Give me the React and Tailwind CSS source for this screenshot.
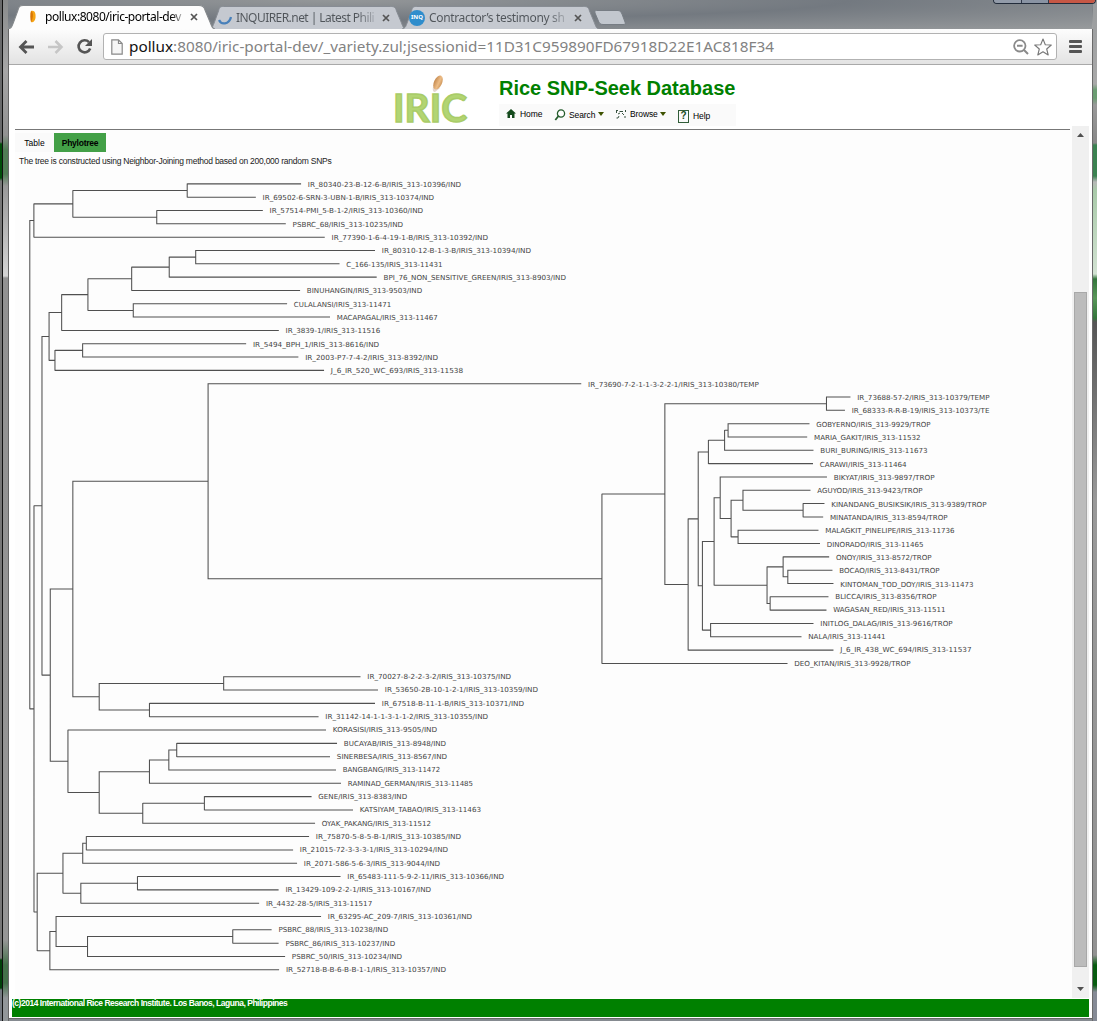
import React from "react";

const FIRST_ROW = 183.9;
const ROW_STEP = 13.336;
const CHART_TOP = 170;

// Leaf: [branch end, label right edge, label]. Branch: { x, c: [upper, lower] }.
const n = (x, a, b) => ({ x, c: [a, b] });

const tree = n(29.4,
  n(33.5,
    n(72.5,
      n(187, [301, 461, "IR_80340-23-B-12-6-B/IRIS_313-10396/IND"], [255.7, 434, "IR_69502-6-SRN-3-UBN-1-B/IRIS_313-10374/IND"]),
      n(156.5, [262.7, 423, "IR_57514-PMI_5-B-1-2/IRIS_313-10360/IND"], [285.7, 403, "PSBRC_68/IRIS_313-10235/IND"])),
    [324.7, 488, "IR_77390-1-6-4-19-1-B/IRIS_313-10392/IND"]),
  n(33.6,
    n(41.6,
      n(48.7,
        n(61.3,
          n(87.6,
            n(131.4,
              n(169,
                n(195.5, [375, 531, "IR_80310-12-B-1-3-B/IRIS_313-10394/IND"], [339.5, 442.5, "C_166-135/IRIS_313-11431"]),
                [376.7, 566, "BPI_76_NON_SENSITIVE_GREEN/IRIS_313-8903/IND"]),
              [300, 422, "BINUHANGIN/IRIS_313-9503/IND"]),
            n(133, [287, 391, "CULALANSI/IRIS_313-11471"], [330, 437.5, "MACAPAGAL/IRIS_313-11467"])),
          [278.7, 380, "IR_3839-1/IRIS_313-11516"]),
        n(54.6,
          n(82.3, [246, 379, "IR_5494_BPH_1/IRIS_313-8616/IND"], [298.3, 438, "IR_2003-P7-7-4-2/IRIS_313-8392/IND"]),
          [324, 463, "J_6_IR_520_WC_693/IRIS_313-11538"])),
      n(49.9,
        n(72.5,
          n(207.9,
            [581.5, 759, "IR_73690-7-2-1-1-3-2-2-1/IRIS_313-10380/TEMP"],
            n(602.2,
              n(665.2,
                n(827, [851, 990, "IR_73688-57-2/IRIS_313-10379/TEMP"], [845.5, 990, "IR_68333-R-R-B-19/IRIS_313-10373/TE"]),
                n(688.5,
                  n(698.6,
                    n(708.8,
                      n(725,
                        n(728.5, [810, 931, "GOBYERNO/IRIS_313-9929/TROP"], [807.7, 921, "MARIA_GAKIT/IRIS_313-11532"]),
                        [814, 928, "BURI_BURING/IRIS_313-11673"]),
                      [813.5, 907, "CARAWI/IRIS_313-11464"]),
                    n(702.8,
                      n(714.5,
                        n(720.6,
                          [827.5, 935, "BIKYAT/IRIS_313-9897/TROP"],
                          n(731.5,
                            n(743.4,
                              [811, 923, "AGUYOD/IRIS_313-9423/TROP"],
                              n(803.6, [825, 987, "KINANDANG_BUSIKSIK/IRIS_313-9389/TROP"], [823.7, 948, "MINATANDA/IRIS_313-8594/TROP"])),
                            n(738.5, [819, 955, "MALAGKIT_PINELIPE/IRIS_313-11736"], [820.5, 924, "DINORADO/IRIS_313-11465"]))),
                        n(767.5,
                          n(783.6,
                            [829.7, 932, "ONOY/IRIS_313-8572/TROP"],
                            n(788.3, [833, 940, "BOCAO/IRIS_313-8431/TROP"], [834, 974, "KINTOMAN_TOD_DOY/IRIS_313-11473"])),
                          n(770.6, [829, 937, "BLICCA/IRIS_313-8356/TROP"], [827, 946, "WAGASAN_RED/IRIS_313-11511"]))),
                      n(711, [814, 953, "INITLOG_DALAG/IRIS_313-9616/TROP"], [802, 886, "NALA/IRIS_313-11441"]))),
                  [834, 972, "J_6_IR_438_WC_694/IRIS_313-11537"])),
              [788, 911, "DEO_KITAN/IRIS_313-9928/TROP"])),
          n(98.9,
            n(223.5, [360.5, 511, "IR_70027-8-2-2-3-2/IRIS_313-10375/IND"], [378, 538, "IR_53650-2B-10-1-2-1/IRIS_313-10359/IND"]),
            n(149.2, [375, 524, "IR_67518-B-11-1-B/IRIS_313-10371/IND"], [318.5, 488, "IR_31142-14-1-1-3-1-1-2/IRIS_313-10355/IND"]))),
        n(67.6,
          [326, 437, "KORASISI/IRIS_313-9505/IND"],
          n(98.9,
            n(149.2,
              n(168.6,
                n(176.5, [337, 446, "BUCAYAB/IRIS_313-8948/IND"], [330, 447, "SINERBESA/IRIS_313-8567/IND"]),
                [336, 440, "BANGBANG/IRIS_313-11472"]),
              [341, 473, "RAMINAD_GERMAN/IRIS_313-11485"]),
            n(142.5,
              n(204.2, [311.5, 407, "GENE/IRIS_313-8383/IND"], [353, 481, "KATSIYAM_TABAO/IRIS_313-11463"]),
              [315, 431, "OYAK_PAKANG/IRIS_313-11512"]))))),
    n(36.8,
      n(62.6,
        n(82.4,
          n(86, [309, 461, "IR_75870-5-8-5-B-1/IRIS_313-10385/IND"], [293, 448, "IR_21015-72-3-3-3-1/IRIS_313-10294/IND"]),
          [297, 440, "IR_2071-586-5-6-3/IRIS_313-9044/IND"]),
        n(80.5,
          n(137.2, [340.5, 504, "IR_65483-111-5-9-2-11/IRIS_313-10366/IND"], [278.5, 431, "IR_13429-109-2-2-1/IRIS_313-10167/IND"]),
          [259, 372, "IR_4432-28-5/IRIS_313-11517"])),
      n(49.5,
        n(55.7,
          [321, 472, "IR_63295-AC_209-7/IRIS_313-10361/IND"],
          n(87.2,
            n(232.6, [271.5, 388, "PSBRC_88/IRIS_313-10238/IND"], [278.5, 395, "PSBRC_86/IRIS_313-10237/IND"]),
            [285, 402, "PSBRC_50/IRIS_313-10234/IND"])),
        [279, 446, "IR_52718-B-B-6-B-B-1-1/IRIS_313-10357/IND"]))));

function layoutTree(root) {
  const lines = [];
  const labels = [];
  let row = 0;
  const visit = (node, fromX) => {
    if (Array.isArray(node)) {
      const y = FIRST_ROW + ROW_STEP * row++;
      lines.push(`M${fromX} ${y}H${node[0]}`);
      labels.push({ x: node[0] + 6.6, end: node[1], y, text: node[2] });
      return y;
    }
    const top = visit(node.c[0], node.x);
    const bottom = visit(node.c[1], node.x);
    const mid = (top + bottom) / 2;
    lines.push(`M${node.x} ${top - 0.4}V${bottom + 0.4}`);
    if (fromX !== null) lines.push(`M${fromX} ${mid}H${node.x}`);
    return mid;
  };
  visit(root, null);
  return { path: lines.join(""), labels };
}

const chart = layoutTree(tree);

function PhyloTree() {
  return (
    <svg className="block h-[829px] w-[1057px]" viewBox={`15 ${CHART_TOP} 1057 829`}>
      <path d={chart.path} fill="none" stroke="#505050" strokeWidth="1.05" transform="translate(-0.2 0)" />
      <g className="fill-[#444] font-['DejaVu_Sans',sans-serif] text-[7px]">
        {chart.labels.map((l) => (
          <text key={l.text} x={l.x} y={Math.round(l.y + 2.75)} textLength={l.end - l.x} lengthAdjust="spacingAndGlyphs">
            {l.text}
          </text>
        ))}
      </g>
    </svg>
  );
}

function TabShape({ active }) {
  return (
    <svg className="absolute inset-0 h-full w-full" viewBox="0 0 206 24" preserveAspectRatio="none">
      <path
        d="M0 24C4 23 4 21 6 16L10 5C11 1 12 .5 15 .5H190C193 .5 195 1 196 5L201 17C203 22 203 23 206 24"
        fill={active ? "#fdfdfd" : "#c5c9d0"}
        stroke={active ? "#85898c" : "#858a91"}
        strokeWidth="1"
      />
    </svg>
  );
}

function CloseX() {
  return (
    <svg className="h-[8px] w-[8px] shrink-0" viewBox="0 0 8 8">
      <path d="M1 1L7 7M7 1L1 7" stroke="#555" strokeWidth="1.7" />
    </svg>
  );
}

function TabStrip() {
  return (
    <div className="flex h-[29px] items-end font-['Noto_Sans',sans-serif] text-[12px]">
      <div className="relative z-10 flex h-[24px] w-[207px] items-center">
        <TabShape active />
        <svg className="relative ml-[21px] h-[14px] w-[8px] shrink-0" viewBox="0 0 8 14">
          <path d="M2 1C6 0 7 4 6.500 8C6 11 4 13 2 12C3 8 1 4 2 1Z" fill="#f5a313" />
          <path d="M2 1C5 2 4 9 2 12C1 9 1 4 2 1Z" fill="#d87505" />
        </svg>
        <span className="relative ml-[8px] w-[138px] whitespace-nowrap bg-gradient-to-r from-black from-[90%] to-[#ccc] bg-clip-text tracking-[-0.45px] text-transparent">
          pollux:8080/iric-portal-dev
        </span>
        <span className="relative ml-[7px] flex"><CloseX /></span>
      </div>
      <div className="relative -ml-[6px] flex h-[23px] w-[197px] items-center">
        <TabShape />
        <svg className="relative ml-[9px] h-[14px] w-[14px] shrink-0" viewBox="0 0 14 14">
          <path d="M1 9C3 14 11 14 13 6" fill="none" stroke="#4880ba" strokeWidth="2.300" />
        </svg>
        <span className="relative ml-[4px] w-[141px] whitespace-nowrap bg-gradient-to-r from-[#50555a] from-[85%] to-[#b4b9c0] bg-clip-text tracking-[-0.55px] text-transparent">
          INQUIRER.net | Latest Phili
        </span>
        <span className="relative ml-[5px] flex"><CloseX /></span>
      </div>
      <div className="relative -ml-[4px] flex h-[23px] w-[197px] items-center">
        <TabShape />
        <span className="relative ml-[7px] flex h-[16px] w-[16px] shrink-0 items-center justify-center rounded-full bg-[#2f8dcc] text-[6px] font-bold tracking-normal text-white">
          INQ
        </span>
        <span className="relative ml-[4px] w-[139px] whitespace-nowrap bg-gradient-to-r from-[#50555a] from-[85%] to-[#b4b9c0] bg-clip-text tracking-[-0.34px] text-transparent">
          Contractor’s testimony sh
        </span>
        <span className="relative ml-[6px] flex"><CloseX /></span>
      </div>
      <svg className="mb-[3px] ml-[-6px] h-[17px] w-[34px]" viewBox="0 0 34 17">
        <path d="M3.500 1.500H25C27 1.500 28 3 29 5L32 13C33 15 32 15.500 30 15.500H10C7 15.500 6 14 5 11L2 4C1.500 2 2 1.500 3.500 1.500Z" fill="#c2c7ce" stroke="#777d84" />
      </svg>
    </div>
  );
}

function Toolbar() {
  return (
    <div className="flex h-[36px] items-center border-b border-[#a9a9a9] bg-gradient-to-b from-[#fdfdfd] to-[#e3e3e3]">
      <svg className="ml-[9px] h-[16px] w-[17px]" viewBox="0 0 17 16">
        <path d="M16 8H3M8.500 2L2.500 8L8.500 14" fill="none" stroke="#555" strokeWidth="2.800" />
      </svg>
      <svg className="ml-[12px] h-[16px] w-[17px]" viewBox="0 0 17 16">
        <path d="M1 8H14M8.500 2L14.500 8L8.500 14" fill="none" stroke="#c6c6c6" strokeWidth="2.500" />
      </svg>
      <svg className="ml-[12px] h-[17px] w-[17px]" viewBox="0 0 17 17">
        <path d="M13 4.200A6 6 0 1 0 14.200 10.500" fill="none" stroke="#555" strokeWidth="2.600" />
        <path d="M16 1V8H9Z" fill="#555" />
      </svg>
      <div className="ml-[10px] flex h-[27px] w-[954px] items-center rounded-[3px] border border-[#b2b2b2] bg-white">
        <svg className="ml-[7px] h-[16px] w-[12px]" viewBox="0 0 12 16">
          <path d="M.8.800H7.500L11.200 4.500V15.200H.800ZM7.500.800V4.500H11.200" fill="#f6f6f6" stroke="#888" strokeWidth="1.200" />
        </svg>
        <svg className="ml-[6px] h-[25px] w-[650px] font-['Noto_Sans',sans-serif] text-[15px]" viewBox="0 0 650 25">
          <text y="18" textLength="645" lengthAdjust="spacingAndGlyphs" fill="#828282">
            <tspan fill="#111">pollux</tspan>:8080/iric-portal-dev/_variety.zul;jsessionid=11D31C959890FD67918D22E1AC818F34
          </text>
        </svg>
        <svg className="ml-auto h-[16px] w-[16px]" viewBox="0 0 16 16">
          <circle cx="6.800" cy="6.800" r="5.700" fill="none" stroke="#8a8a8a" strokeWidth="1.800" />
          <path d="M4 6.800H9.600M11 11L15 15" stroke="#8a8a8a" strokeWidth="2" />
        </svg>
        <svg className="ml-[5px] mr-[4px] h-[18px] w-[18px]" viewBox="0 0 18 18">
          <path d="M9 1L11.300 6.700L17.300 7L12.700 11L14.200 17L9 13.700L3.800 17L5.300 11L.700 7L6.700 6.700Z" fill="#fff" stroke="#777" strokeWidth="1.100" strokeLinejoin="round" />
        </svg>
      </div>
      <div className="ml-[12px] flex w-[13px] flex-col gap-[2px]">
        <span className="h-[3px] rounded-[1px] bg-[#555]" />
        <span className="h-[3px] rounded-[1px] bg-[#555]" />
        <span className="h-[3px] rounded-[1px] bg-[#555]" />
      </div>
    </div>
  );
}

function IricLogo() {
  return (
    <svg className="ml-[383px] h-[55px] w-[76px] shrink-0" viewBox="0 0 76 55">
      <defs>
        <linearGradient id="grain" x1="0" y1="0" x2="1" y2="0">
          <stop offset="0" stopColor="#c58a50" />
          <stop offset=".6" stopColor="#edbd87" />
          <stop offset="1" stopColor="#cf985d" />
        </linearGradient>
      </defs>
      <g className="font-['Lato',sans-serif] text-[39px] font-bold" fill="#b2d573" stroke="#a9cc68" strokeWidth="1.5">
        <text x="1" y="47" textLength="74" lengthAdjust="spacingAndGlyphs">IRIC</text>
      </g>
      <path d="M41 12Q43 11 48 13L43 17Q40 17 41 12Z" fill="#e3d6d0" />
      <ellipse cx="46" cy="7.500" rx="4" ry="7.500" transform="rotate(25 46 7.500)" fill="url(#grain)" />
    </svg>
  );
}

function Caret() {
  return (
    <svg className="mb-[2px] ml-[2px] h-[4px] w-[6px]" viewBox="0 0 6 4">
      <path d="M0 0H6L3 4Z" fill="#3e5200" />
    </svg>
  );
}

function Header() {
  return (
    <header className="flex h-[64px] items-start border-b border-transparent pt-[10px]">
      <IricLogo />
      <div className="ml-[31px] flex flex-col">
        <h1 className="mt-[2px] h-[22px] w-[240px] whitespace-nowrap font-['Liberation_Sans',sans-serif] text-[20px] font-bold leading-[22px] tracking-[-0.02px] text-[#008000]">
          Rice SNP-Seek Database
        </h1>
        <nav className="mt-[5px] flex h-[22px] w-[237px] items-center bg-[#fafafa] font-['Liberation_Sans',sans-serif] text-[8.500px] leading-none tracking-[-0.1px] text-black">
          <svg className="mb-[3px] ml-[7px] h-[9px] w-[10px]" viewBox="0 0 10 9">
            <path d="M5 0L10 4.500H8.500V9H6V6H4V9H1.500V4.500H0Z" fill="#144a1c" />
          </svg>
          <span className="mb-[2px] ml-[4px] w-[22px]">Home</span>
          <svg className="ml-[12px] h-[12px] w-[12px]" viewBox="0 0 11 12">
            <circle cx="6.500" cy="4.500" r="3.600" fill="#fff" stroke="#245c2c" strokeWidth="1.300" />
            <path d="M4 7L.8 11" stroke="#245c2c" strokeWidth="1.800" />
          </svg>
          <span className="ml-[3px] w-[27px]">Search</span>
          <Caret />
          <svg className="mb-[1px] ml-[12px] h-[9px] w-[10px]" viewBox="0 0 10 9">
            <path d="M.5 0V3M0 .500H2M3.500 1.500H7M9.500 0V2M2 4L4 3M6 3L8 5M.5 8H2L3 6M8 7H10" fill="none" stroke="#385240" strokeWidth="1" />
          </svg>
          <span className="mb-[2px] ml-[4px] w-[28px]">Browse</span>
          <Caret />
          <span className="ml-[12px] mt-[2px] flex h-[13px] w-[11px] items-center justify-center border border-[#315d38] text-[10px] font-bold text-[#174b20]">?</span>
          <span className="mt-[2px] ml-[4px]">Help</span>
        </nav>
      </div>
    </header>
  );
}

function Scrollbar() {
  return (
    <div className="-mt-[3px] flex h-[872px] w-[17px] shrink-0 flex-col items-center bg-[#f0f0f0]">
      <svg className="mt-[7px] h-[4px] w-[7px]" viewBox="0 0 7 4"><path d="M0 4H7L3.500 0Z" fill="#505050" /></svg>
      <div className="mt-[155px] h-[675px] w-[13px] border border-[#a8a8a8] bg-[#bcbcbc]" />
      <svg className="mt-[20px] h-[4px] w-[7px]" viewBox="0 0 7 4"><path d="M0 0H7L3.500 4Z" fill="#505050" /></svg>
    </div>
  );
}

export default function App() {
  return (
    <div className="relative flex h-[1021px] w-[1097px] flex-col overflow-hidden bg-[linear-gradient(180deg,#85898d_0px,#7e8287_10px,#a2a4a5_26px,#a2a2a2_60px,#969696_100%)]">
      <div className="flex h-full">
        <div className="flex w-[9px] shrink-0">
          <div className="w-[2px] bg-[linear-gradient(180deg,#68696a_0,#68696a_142px,#004d08_144px,#004d08_178px,#777_181px,#777_958px,#004008_960px,#004008_988px,#747980_990px)]" />
          <div className="w-px bg-[#111]" />
          <div className="w-[5px] bg-[linear-gradient(180deg,#8a8c8d_0,#a6a6a6_70px,#929292_135px,#517d55_150px,#517d55_174px,#999_186px,#d4d4d4_276px,#929292_278px,#969696_940px,#44714a_965px,#44714a_983px,#929699_998px)]" />
          <div className="mt-[29px] w-px bg-[#666]" />
        </div>
        <div className="flex w-[1083px] shrink-0 flex-col">
          <div className="-ml-px bg-[radial-gradient(ellipse_at_30%_0%,#949799_0%,#737980_48%,#989b9d_100%)]">
            <TabStrip />
          </div>
          <Toolbar />
          <main className="flex h-[953px] flex-col bg-white">
            <Header />
            <div className="ml-[6px] flex h-[869px]">
              <section className="flex w-[1057px] flex-col bg-[#fdfdfd] font-['Liberation_Sans',sans-serif] text-[8.500px] text-black">
                <div className="h-px w-[1055px] bg-[#777]" />
                <div className="mt-[3px] flex h-[19px] items-center">
                  <span className="flex h-full w-[39px] items-center justify-center bg-[#fafafa] pt-[2px]">Table</span>
                  <span className="flex h-full w-[52px] items-center justify-center bg-[#43a047] pt-[2px] font-bold tracking-[-0.25px]">Phylotree</span>
                </div>
                <p className="ml-[4px] h-[18px] whitespace-nowrap pt-[4px] leading-[10px] tracking-[-0.24px] text-[#222]">
                  The tree is constructed using Neighbor-Joining method based on 200,000 random SNPs
                </p>
                <PhyloTree />
              </section>
              <Scrollbar />
            </div>
            <footer className="ml-[3px] mt-[1px] h-[18px] w-[1077px] shrink-0 bg-[#008000] font-['Liberation_Sans',sans-serif] text-[8.500px] font-bold leading-[9px] tracking-[-0.48px] text-white">
              (c)2014 International Rice Research Institute. Los Banos, Laguna, Philippines
            </footer>
          </main>
          <div className="h-[3px] border-t border-[#686868] bg-[#858a90]" />
        </div>
        <div className="mt-[29px] w-px bg-[#6a6a6a]" />
        <div className="w-[4px] bg-[linear-gradient(180deg,#999c9e_0,#a9a9a9_84px,#6b9d72_90px,#6b9d72_98px,#999_105px,#888_143px,#3b8251_145px,#3b8251_176px,#b8b8b8_182px,#a9caa9_190px,#d2e2d2_274px,#33763b_279px,#599659_298px,#33763b_318px,#555_322px,#999_500px,#929292_955px,#075c10_965px,#075c10_985px,#858a95_992px)]" />
      </div>
      <div className="absolute left-[993px] top-0 flex h-[4px] w-[103px] overflow-hidden rounded-b-[4px] border border-t-0 border-[#222c3b]">
        <span className="w-[28px] border-r border-[#30394a] bg-[#929ba9]" />
        <span className="w-[27px] border-r border-[#30394a] bg-[#8993a3]" />
        <span className="flex-1 bg-[#c65745]" />
      </div>
    </div>
  );
}
